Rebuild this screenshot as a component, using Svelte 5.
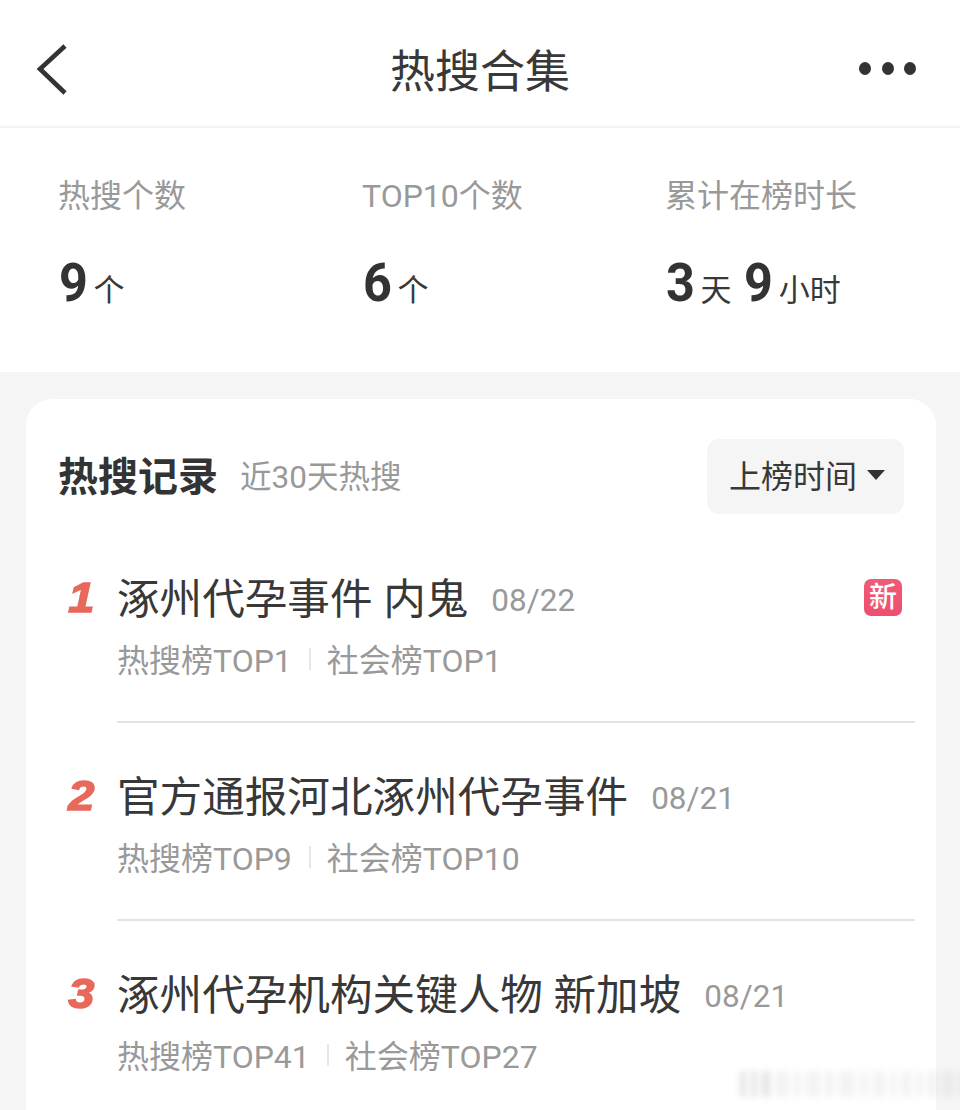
<script>
  const stats = [
    { label: '热搜个数', parts: [['9', '个']] },
    { label: 'TOP10个数', parts: [['6', '个']] },
    { label: '累计在榜时长', parts: [['3', '天'], ['9', '小时']] }
  ];
  const rows = [
    { n: 1, title: '涿州代孕事件 内鬼', date: '08/22', a: '热搜榜TOP1', b: '社会榜TOP1', isNew: true },
    { n: 2, title: '官方通报河北涿州代孕事件', date: '08/21', a: '热搜榜TOP9', b: '社会榜TOP10' },
    { n: 3, title: '涿州代孕机构关键人物 新加坡', date: '08/21', a: '热搜榜TOP41', b: '社会榜TOP27' }
  ];
  const marks = [6, 6, 8, 14, 7, 14, 9, 16, 8, 12, 6, 10, 7, 9, 12, 14];
</script>

<div class="page">
  <header class="nav">
    <svg class="back" width="32" height="52" viewBox="0 0 32 52" aria-hidden="true">
      <path d="M29 2 L4 25 L29 49" fill="none" stroke="#333" stroke-width="4.6" />
    </svg>
    <h1>热搜合集</h1>
    <div class="more"><i></i><i></i><i></i></div>
  </header>

  <section class="stats">
    {#each stats as s}
      <div class="stat">
        <div class="label">{s.label}</div>
        <div class="value">
          {#each s.parts as p}
            <b>{p[0]}</b><span>{p[1]}</span>
          {/each}
        </div>
      </div>
    {/each}
  </section>

  <section class="card">
    <div class="head">
      <h2>热搜记录</h2>
      <span class="range">近30天热搜</span>
      <div class="sort">上榜时间<i class="caret"></i></div>
    </div>
    {#each rows as r, i}
      <article class="row">
        <div class="rank"><span>{r.n}</span></div>
        <div class="body" class:last={i === rows.length - 1}>
          <div class="line">
            <span class="title">{r.title}</span>
            <span class="date">{r.date}</span>
            {#if r.isNew}<span class="new">新</span>{/if}
          </div>
          <div class="sub">
            <span>{r.a}</span><i class="sep"></i><span>{r.b}</span>
          </div>
        </div>
      </article>
    {/each}
    <div class="mark" aria-hidden="true">
      {#each marks as w}<i style="width:{w}px"></i>{/each}
    </div>
  </section>
</div>

<style>
  :global(body) {
    margin: 0;
    background: #f5f5f5;
  }
  .page {
    width: 960px;
    height: 1110px;
    overflow: hidden;
    font-family: Roboto, "Noto Sans CJK SC", sans-serif;
    color: #383838;
    background: #f5f5f5;
  }
  .nav {
    height: 126px;
    border-bottom: 2px solid #f3f3f3;
    background: #fff;
    display: flex;
    align-items: center;
    justify-content: space-between;
    padding: 0 44px 0 36px;
    box-sizing: content-box;
    position: relative;
  }
  .back {
    margin-top: 13px;
  }
  h1 {
    position: absolute;
    left: 0;
    right: 0;
    top: 43px;
    margin: 0;
    text-align: center;
    font-size: 45px;
    line-height: 60px;
    font-weight: 400;
  }
  .more {
    display: flex;
    gap: 10.5px;
    margin-top: 10px;
  }
  .more i {
    width: 12px;
    height: 13px;
    border-radius: 50%;
    background: #333;
  }
  .stats {
    height: 244px;
    background: #fff;
    display: grid;
    grid-template-columns: 304px 303px 1fr;
    padding-left: 58px;
    box-sizing: border-box;
  }
  .label {
    margin-top: 46px;
    font-size: 32px;
    line-height: 44px;
    color: #999;
  }
  .value {
    margin-top: 35px;
    height: 60px;
    display: flex;
    align-items: baseline;
  }
  .value b {
    display: inline-block;
    font-size: 53px;
    line-height: 60px;
    font-weight: 700;
    color: #333;
    margin-left: 1px;
    margin-right: 4px;
    transform: scaleX(0.95);
    transform-origin: left center;
  }
  .value span {
    font-size: 31px;
    margin-right: 12px;
  }
  .card {
    position: relative;
    margin: 27px 24px 0 26px;
    height: 760px;
    padding: 40px 21px 0 0;
    background: #fff;
    border-radius: 26px;
    box-sizing: border-box;
  }
  .head {
    display: flex;
    align-items: center;
    height: 75px;
    padding-left: 32px;
    padding-right: 11px;
  }
  h2 {
    margin: 0 0 6px;
    font-size: 40px;
    font-weight: 700;
    color: #333;
  }
  .range {
    margin: 0 0 6px 22px;
    font-size: 31.5px;
    color: #999;
  }
  .sort {
    margin-left: auto;
    width: 197px;
    height: 75px;
    border-radius: 12px;
    background: #f5f5f5;
    display: flex;
    align-items: center;
    padding: 0 0 6px 22px;
    box-sizing: border-box;
    font-size: 32px;
  }
  .caret {
    margin-left: 10px;
    margin-top: 2px;
    border-left: 9px solid transparent;
    border-right: 9px solid transparent;
    border-top: 10px solid #333;
  }
  .row {
    display: flex;
    height: 198px;
  }
  .row:first-of-type {
    margin-top: 12px;
  }
  .rank {
    width: 91px;
    padding-top: 47px;
    box-sizing: border-box;
    text-align: right;
    padding-right: 23px;
    font-family: "Liberation Sans", sans-serif;
    font-size: 42px;
    line-height: 50px;
    font-weight: 700;
    font-style: italic;
    color: #e8685c;
    -webkit-text-stroke: 1.5px #e8685c;
  }
  .rank span {
    display: inline-block;
    transform: scaleX(1.12);
    transform-origin: right center;
  }
  .body {
    flex: 1;
    position: relative;
    border-bottom: 2px solid #e4e4e4;
    box-sizing: border-box;
    padding-top: 45px;
    height: 197px;
  }
  .body.last {
    border-bottom: 0;
  }
  .line {
    display: flex;
    align-items: baseline;
    height: 56px;
  }
  .title {
    font-size: 42.6px;
    line-height: 56px;
    white-space: pre;
  }
  .date {
    align-self: flex-start;
    margin-left: 23px;
    font-size: 31.5px;
    line-height: 60px;
    color: #999;
  }
  .new {
    position: absolute;
    right: 13px;
    top: 53px;
    width: 38px;
    height: 37px;
    border-radius: 7px;
    background: linear-gradient(#ee5c78, #ef4e6e);
    color: #fff;
    font-size: 28px;
    font-weight: 500;
    line-height: 37px;
    text-align: center;
  }
  .sub {
    margin-top: 9px;
    height: 44px;
    display: flex;
    align-items: center;
    font-size: 32px;
    color: #999;
  }
  .sep {
    width: 2px;
    height: 22px;
    margin: 2px 16px 0 17px;
    background: #e6e6e6;
  }
  .mark {
    position: absolute;
    left: 714px;
    top: 672px;
    display: flex;
    gap: 5px;
    filter: blur(3px);
    opacity: 0.14;
  }
  .mark i {
    height: 26px;
    background: #aaa;
  }
  .mark i:nth-child(-n + 3) {
    background: #444;
  }
</style>
